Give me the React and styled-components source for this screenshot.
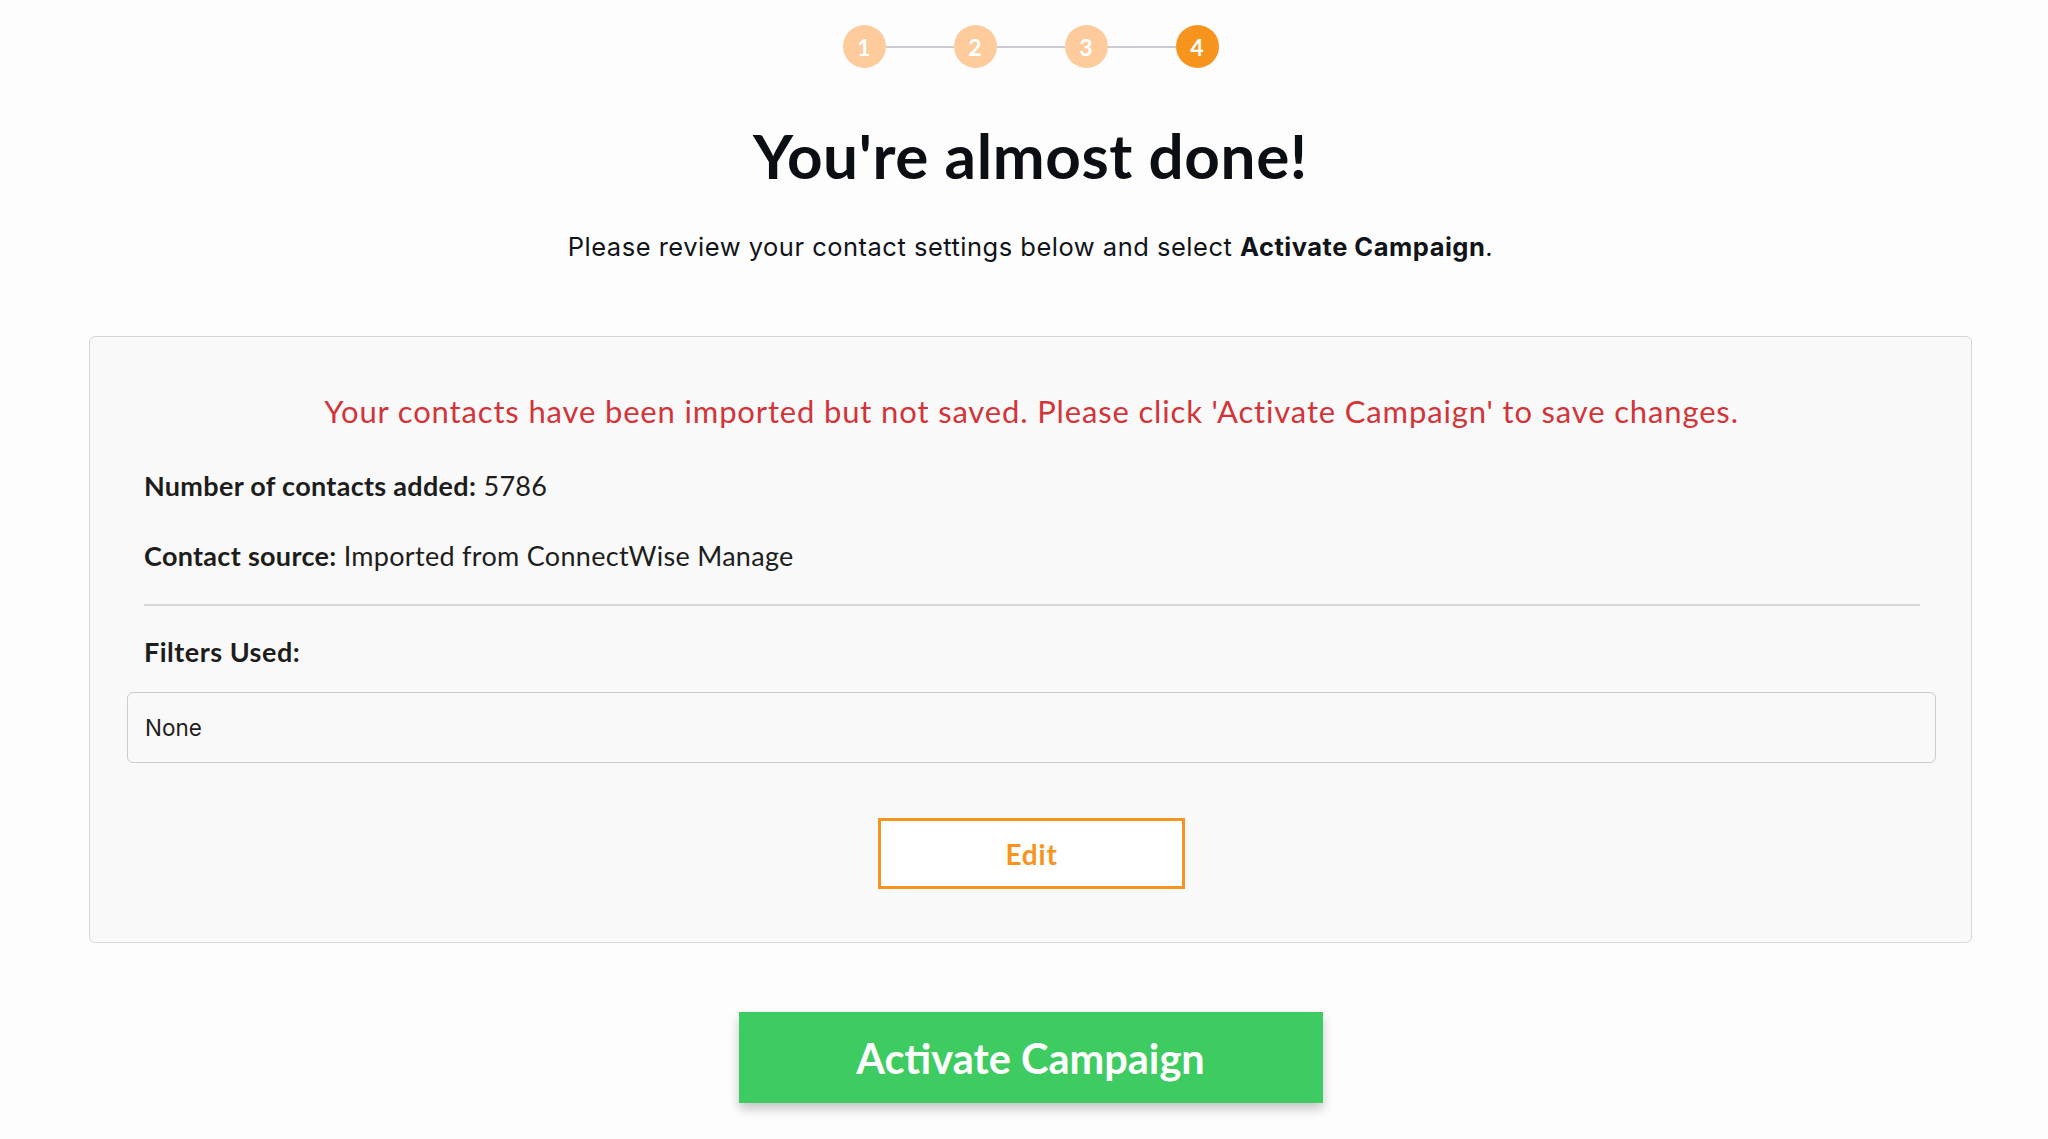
import React from 'react';
import styled, { createGlobalStyle } from 'styled-components';

const GlobalStyle = createGlobalStyle`
  body {
    margin: 0;
    background: #fdfdfd;
    font-family: Lato, "Noto Sans", sans-serif;
  }
`;

const Page = styled.div`
  display: flex;
  flex-direction: column;
  align-items: center;
  padding: 25px 76px 40px 89px;
`;

const Stepper = styled.div`
  display: flex;
  align-items: center;
`;

const StepDot = styled.div`
  width: 43px;
  height: 43px;
  border-radius: 50%;
  display: flex;
  align-items: center;
  justify-content: center;
  background: ${(p) => (p.active ? '#f7941d' : '#fdcb9c')};
  color: #fff;
  font-weight: 700;
  font-size: 23px;
`;

const StepLine = styled.div`
  width: 68px;
  height: 2px;
  background: #c9cdd3;
`;

const Title = styled.h1`
  margin: 51px 0 0;
  font-size: 62px;
  line-height: 72px;
  font-weight: 700;
  letter-spacing: 0.6px;
  color: #0b0e13;
`;

const Subtitle = styled.p`
  margin: 41px 0 0;
  font-family: Inter, "Liberation Sans", sans-serif;
  font-size: 25.5px;
  line-height: 30px;
  letter-spacing: 0.5px;
  color: #111418;

  b {
    font-weight: 700;
  }
`;

const Card = styled.div`
  align-self: stretch;
  margin-top: 74px;
  background: #f9f9f9;
  border: 1px solid #d3d6db;
  border-radius: 6px;
  padding: 56px 35px 53px 37px;
  display: flex;
  flex-direction: column;
`;

const Warning = styled.div`
  text-align: center;
  color: #d2343a;
  font-size: 31px;
  line-height: 36px;
  letter-spacing: 0.85px;
`;

const Details = styled.div`
  padding: 0 16px 0 17px;
  margin-top: 41px;
  display: flex;
  flex-direction: column;
`;

const InfoRow = styled.div`
  font-size: 27px;
  line-height: 32px;
  letter-spacing: 0.3px;
  color: #1d1d1d;
  margin-top: ${(p) => p.gap || 0}px;

  b {
    font-weight: 700;
  }
`;

const Divider = styled.hr`
  border: none;
  height: 2px;
  background: #d6d6d6;
  margin: 32px 0 30px;
`;

const Label = styled.div`
  font-size: 27px;
  line-height: 32px;
  letter-spacing: 0.5px;
  font-weight: 700;
  color: #1d1d1d;
`;

const FilterBox = styled.div`
  margin-top: 24px;
  height: 71px;
  box-sizing: border-box;
  border: 1px solid #cccccc;
  border-radius: 6px;
  background: #f9f9f9;
  display: flex;
  align-items: center;
  padding-left: 17px;
  font-family: Inter, "Liberation Sans", sans-serif;
  font-size: 22.5px;
  color: #1d1d1d;
`;

const EditButton = styled.button`
  align-self: center;
  margin-top: 55px;
  width: 307px;
  height: 71px;
  box-sizing: border-box;
  border: 3px solid #f7941d;
  background: #fff;
  color: #f7941d;
  font-family: Lato, sans-serif;
  font-weight: 700;
  font-size: 28px;
  letter-spacing: 0.8px;
  cursor: pointer;
`;

const ActivateButton = styled.button`
  margin-top: 69px;
  width: 584px;
  height: 91px;
  border: none;
  background: #3ecc62;
  color: #fff;
  font-family: Lato, sans-serif;
  font-weight: 700;
  font-size: 41.5px;
  box-shadow: 0 6px 10px rgba(0, 0, 0, 0.22);
  cursor: pointer;
`;

const steps = [1, 2, 3, 4];

export default function App() {
  return (
    <>
      <GlobalStyle />
      <Page>
        <Stepper>
          {steps.map((n, i) => (
            <React.Fragment key={n}>
              {i > 0 && <StepLine />}
              <StepDot active={n === 4}>{n}</StepDot>
            </React.Fragment>
          ))}
        </Stepper>
        <Title>You're almost done!</Title>
        <Subtitle>
          Please review your contact settings below and select <b>Activate Campaign</b>.
        </Subtitle>
        <Card>
          <Warning>
            Your contacts have been imported but not saved. Please click 'Activate Campaign' to save changes.
          </Warning>
          <Details>
            <InfoRow>
              <b>Number of contacts added:</b> 5786
            </InfoRow>
            <InfoRow gap={38}>
              <b>Contact source:</b> Imported from ConnectWise Manage
            </InfoRow>
            <Divider />
            <Label>Filters Used:</Label>
          </Details>
          <FilterBox>None</FilterBox>
          <EditButton>Edit</EditButton>
        </Card>
        <ActivateButton>Activate Campaign</ActivateButton>
      </Page>
    </>
  );
}
